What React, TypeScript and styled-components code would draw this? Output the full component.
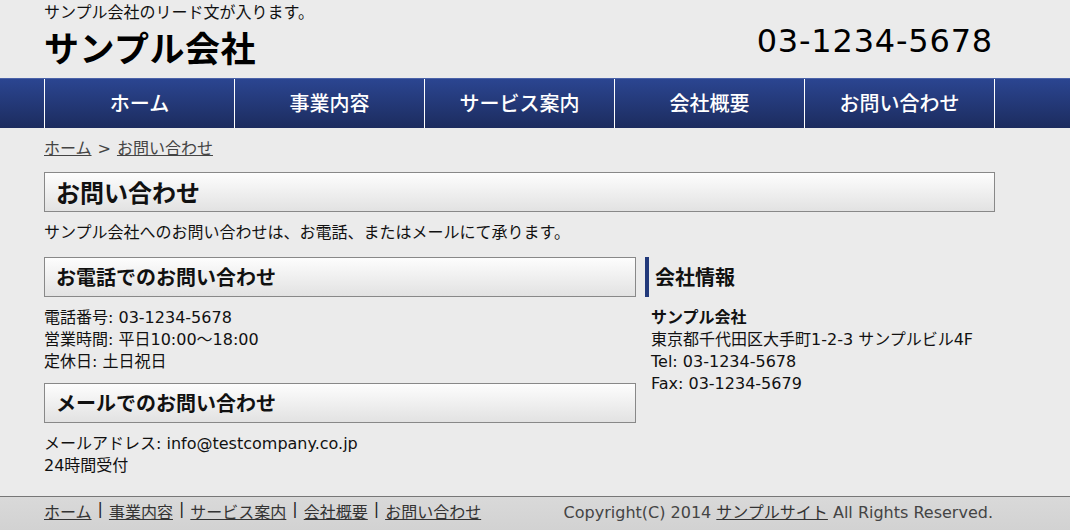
import React from "react";
import styled, { createGlobalStyle } from "styled-components";

const Global = createGlobalStyle`
  html, body { margin: 0; padding: 0; }
  body {
    background: #ebebeb;
    font-family: "DejaVu Sans", "Noto Sans CJK JP", sans-serif;
    color: #111;
  }
  * { box-sizing: border-box; }
`;

const Page = styled.div`
  min-height: 530px;
  display: flex;
  flex-direction: column;
`;

const Inner = styled.div`
  width: 951px;
  margin-left: 44px;
`;

const Header = styled(Inner)`
  display: flex;
  justify-content: space-between;
  align-items: flex-end;
  height: 78px;
`;

const Brand = styled.div`
  display: flex;
  flex-direction: column;
`;

const Lead = styled.p`
  margin: 0;
  font-size: 16px;
  line-height: 20px;
`;

const Logo = styled.h1`
  margin: 0;
  font-size: 35px;
  font-weight: bold;
  line-height: 55px;
  letter-spacing: 0.5px;
  color: #000;
`;

const Phone = styled.div`
  font-size: 32px;
  line-height: 40px;
  margin-bottom: 17px;
  margin-right: 2px;
  letter-spacing: 0.8px;
  color: #000;
`;

const NavBar = styled.nav`
  background: linear-gradient(#2b4591, #1c2c5e);
  border-top: 1px solid #4a62a8;
  height: 50px;
`;

const NavList = styled(Inner)`
  display: flex;
  height: 100%;
  border-left: 1px solid #fff;
  width: 950px;
`;

const NavItem = styled.a`
  flex: 0 0 190px;
  display: flex;
  align-items: center;
  justify-content: center;
  border-right: 1px solid #fff;
  color: #fff;
  font-size: 20px;
  font-weight: 500;
  text-decoration: none;
  padding-bottom: 3px;
`;

const Main = styled(Inner)`
  flex: 1;
  padding-top: 9px;
`;

const Crumbs = styled.div`
  font-size: 16px;
  line-height: 24px;
  color: #444;
  display: flex;
  gap: 6px;
`;

const CrumbLink = styled.a`
  color: #444;
  text-decoration: underline;
`;

const BoxHeading = styled.h2<{ $size: number }>`
  margin: 0;
  height: 40px;
  display: flex;
  align-items: center;
  padding-left: 11px;
  padding-bottom: 2px;
  border: 1px solid #888;
  background: linear-gradient(#fdfdfd, #e2e2e2);
  font-size: ${(p) => p.$size}px;
  font-weight: bold;
  color: #111;
`;

const PageTitle = styled(BoxHeading)`
  margin-top: 11px;
`;

const Intro = styled.p`
  margin: 10px 0 13px;
  font-size: 16px;
  line-height: 22px;
`;

const Columns = styled.div`
  display: flex;
  gap: 9px;
`;

const LeftCol = styled.div`
  width: 592px;
  display: flex;
  flex-direction: column;
`;

const RightCol = styled.div`
  flex: 1;
  display: flex;
  flex-direction: column;
`;

const SideHeading = styled.h3`
  margin: 0;
  height: 40px;
  display: flex;
  align-items: center;
  padding-left: 6px;
  padding-bottom: 2px;
  border-left: 4px solid #22397a;
  font-size: 20px;
  font-weight: bold;
  color: #111;
`;

const Text = styled.p<{ $indent?: number }>`
  margin: 10px 0 10px ${(p) => p.$indent ?? 0}px;
  font-size: 16px;
  line-height: 22px;
`;

const Strong = styled.strong`
  font-weight: bold;
`;

const Footer = styled.footer`
  border-top: 1px solid #777;
  background: linear-gradient(#d9d9d9, #d2d2d2);
  height: 34px;
`;

const FooterInner = styled(Inner)`
  display: flex;
  justify-content: space-between;
  align-items: center;
  height: 100%;
  font-size: 16px;
  color: #444;
  width: 949px;
  padding-bottom: 6px;
`;

const FooterLinks = styled.div`
  display: flex;
  gap: 6px;
`;

const FLink = styled.a`
  color: #333;
  text-decoration: underline;
`;

const Sep = styled.span`
  color: #222;
`;

const navItems = ["ホーム", "事業内容", "サービス案内", "会社概要", "お問い合わせ"];

export default function App() {
  return (
    <Page>
      <Global />
      <Header>
        <Brand>
          <Lead>サンプル会社のリード文が入ります。</Lead>
          <Logo>サンプル会社</Logo>
        </Brand>
        <Phone>03-1234-5678</Phone>
      </Header>
      <NavBar>
        <NavList>
          {navItems.map((n) => (
            <NavItem key={n} href="#">
              {n}
            </NavItem>
          ))}
        </NavList>
      </NavBar>
      <Main>
        <Crumbs>
          <CrumbLink href="#">ホーム</CrumbLink>
          <span>&gt;</span>
          <CrumbLink href="#">お問い合わせ</CrumbLink>
        </Crumbs>
        <PageTitle $size={24}>お問い合わせ</PageTitle>
        <Intro>サンプル会社へのお問い合わせは、お電話、またはメールにて承ります。</Intro>
        <Columns>
          <LeftCol>
            <BoxHeading $size={20}>お電話でのお問い合わせ</BoxHeading>
            <Text>
              電話番号: 03-1234-5678
              <br />
              営業時間: 平日10:00〜18:00
              <br />
              定休日: 土日祝日
            </Text>
            <BoxHeading $size={20}>メールでのお問い合わせ</BoxHeading>
            <Text>
              メールアドレス: info@testcompany.co.jp
              <br />
              24時間受付
            </Text>
          </LeftCol>
          <RightCol>
            <SideHeading>会社情報</SideHeading>
            <Text $indent={6}>
              <Strong>サンプル会社</Strong>
              <br />
              東京都千代田区大手町1-2-3 サンプルビル4F
              <br />
              Tel: 03-1234-5678
              <br />
              Fax: 03-1234-5679
            </Text>
          </RightCol>
        </Columns>
      </Main>
      <Footer>
        <FooterInner>
          <FooterLinks>
            {navItems.map((n, i) => (
              <React.Fragment key={n}>
                {i > 0 && <Sep>|</Sep>}
                <FLink href="#">{n}</FLink>
              </React.Fragment>
            ))}
          </FooterLinks>
          <span>
            Copyright(C) 2014 <FLink href="#">サンプルサイト</FLink> All Rights Reserved.
          </span>
        </FooterInner>
      </Footer>
    </Page>
  );
}
